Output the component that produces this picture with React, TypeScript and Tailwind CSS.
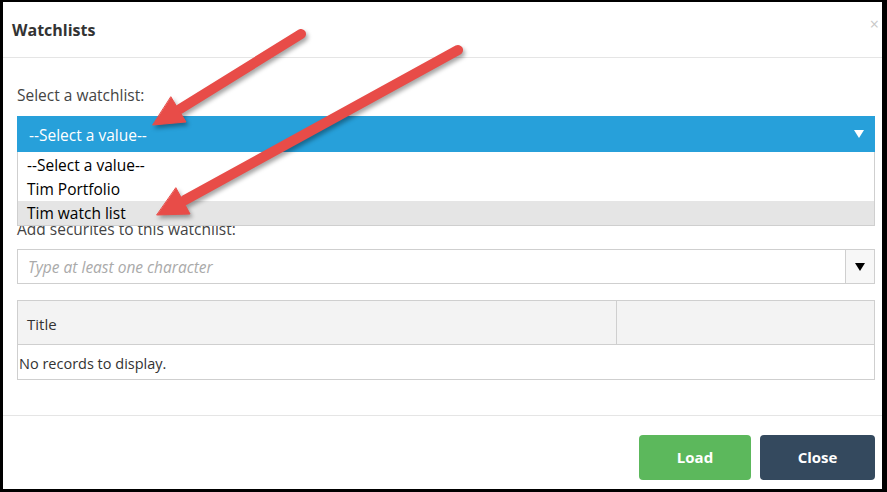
import { useState } from "react";

const font = { fontFamily: '"Open Sans", "Segoe UI", Arial, sans-serif' };

const options = ["--Select a value--", "Tim Portfolio", "Tim watch list"];

function Caret({ className }: { className: string }) {
  return (
    <svg viewBox="0 0 10 8" className={className} aria-hidden="true">
      <path d="M0 0 L10 0 L5 8 Z" fill="currentColor" />
    </svg>
  );
}

export default function App() {
  const [hovered] = useState(2);

  return (
    <div className="relative h-[492px] w-[887px] overflow-hidden bg-black" style={font}>
      <div className="absolute left-[3px] top-[2px] flex h-[487px] w-[879px] flex-col bg-white">
        {/* header */}
        <div className="flex h-[56px] shrink-0 items-center justify-between border-b border-[#e5e5e5] pl-[9px] pr-[3px]">
          <h2 className="text-[16px] font-bold text-[#333]">Watchlists</h2>
          <span className="-mt-[12px] text-[16px] leading-none text-[#c8c8c8]">×</span>
        </div>

        {/* body */}
        <div className="relative flex-1 pl-[14px] pr-[7px] pt-[26px]">
          <label className="block text-[15.5px] leading-[22px] text-[#444]">Select a watchlist:</label>
          <div className="relative mt-[10px]">
            <div className="flex h-[36px] items-center justify-between bg-[#27a0da] pl-[12px] pr-[11px] text-[15.5px] text-white">
              <span className="pt-[3px]">--Select a value--</span>
              <Caret className="h-[8px] w-[10px] text-white" />
            </div>
            {/* open dropdown list */}
            <ul className="absolute left-0 right-0 top-[36px] z-10 border border-t-0 border-[#cfcfcf] bg-white pt-[1px] text-[15.5px] text-black">
              {options.map((o, i) => (
                <li
                  key={o}
                  className={`h-[24px] pl-[9px] leading-[25px] ${i === hovered ? "bg-[#e5e5e5]" : ""}`}
                >
                  {o}
                </li>
              ))}
            </ul>
          </div>

          <label className="mt-[66px] block text-[15.5px] leading-[22px] text-[#444]">
            Add securites to this watchlist:
          </label>
          <div className="mt-[9px] flex h-[35px] border border-[#cfcfcf]">
            <input
              readOnly
              placeholder="Type at least one character"
              className="flex-1 bg-white pl-[10px] pt-[3px] text-[15.5px] italic outline-none placeholder:text-[#aaa]"
            />
            <div className="flex w-[29px] items-center justify-center border-l border-[#cfcfcf] bg-[#f7f7f7]">
              <Caret className="h-[8px] w-[10px] text-black" />
            </div>
          </div>

          <table className="mt-[16px] w-full border-collapse border border-[#cfcfcf] text-[15px]">
            <thead>
              <tr className="h-[44px] bg-[#f3f3f3]">
                <th className="w-[599px] border-r border-[#cfcfcf] pl-[9px] pt-[3px] text-left font-normal text-[#333]">
                  Title
                </th>
                <th />
              </tr>
            </thead>
            <tbody>
              <tr className="h-[35px] border-t border-[#cfcfcf]">
                <td colSpan={2} className="pl-[1px] pt-[3px] text-[14.5px] text-[#333]">
                  No records to display.
                </td>
              </tr>
            </tbody>
          </table>
        </div>

        {/* footer */}
        <div className="flex h-[74px] shrink-0 items-start justify-end gap-[9px] border-t border-[#e5e5e5] pr-[7px] pt-[19px]">
          <button className="h-[45px] w-[112px] rounded-[4px] bg-[#5cb85c] text-[15px] font-bold text-white">
            Load
          </button>
          <button className="h-[45px] w-[115px] rounded-[4px] bg-[#34495e] text-[15px] font-bold text-white">
            Close
          </button>
        </div>
      </div>

      {/* annotation arrows */}
      <svg
        aria-hidden="true"
        className="pointer-events-none absolute inset-0 z-20 h-full w-full drop-shadow-[2px_3px_2px_rgba(0,0,0,0.35)]"
        viewBox="0 0 887 492"
      >
        <g fill="#e84c48" stroke="#e84c48" strokeLinecap="round" strokeLinejoin="round">
          <line x1="301" y1="34" x2="180" y2="109" strokeWidth={10} />
          <polygon points="153,125 186,122 171,97" strokeWidth={1} />
          <line x1="458" y1="50" x2="185" y2="200" strokeWidth={10} />
          <polygon points="157,215 190,214 176,188" strokeWidth={1} />
        </g>
      </svg>
    </div>
  );
}
